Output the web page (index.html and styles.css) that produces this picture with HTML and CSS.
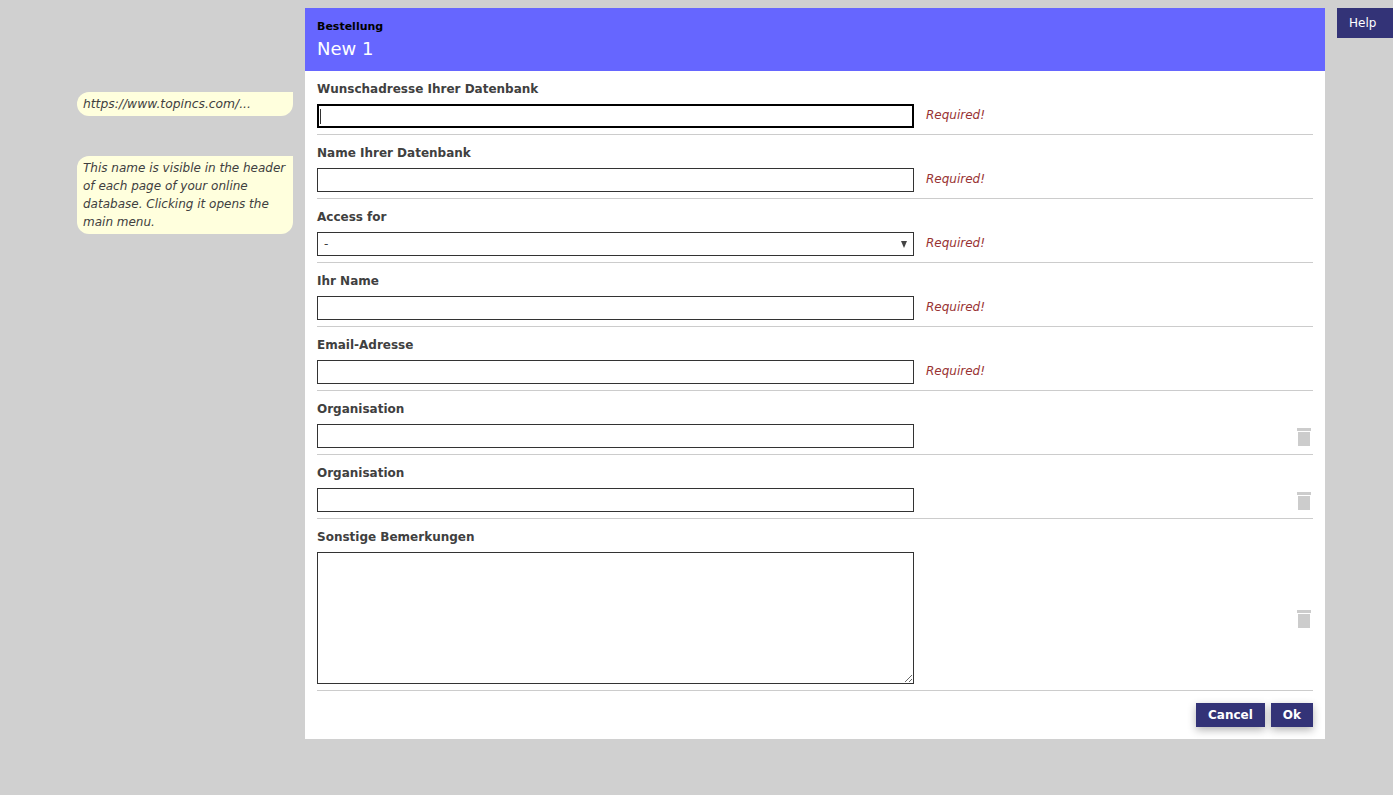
FILE: index.html
```html
<!DOCTYPE html>
<html lang="de">
<head>
<meta charset="utf-8">
<title>Bestellung</title>
<link rel="stylesheet" href="styles.css">
</head>
<body>
<div class="page">
  <aside class="notes">
    <p class="note note-url">https://www.topincs.com/...</p>
    <p class="note">This name is visible in the header of each page of your online database. Clicking it opens the main menu.</p>
  </aside>
  <main class="panel">
    <header class="panel-head">
      <div class="eyebrow">Bestellung</div>
      <h1 class="title">New 1</h1>
    </header>
    <form class="form">
      <div class="row">
        <label class="label">Wunschadresse Ihrer Datenbank</label>
        <div class="line"><span class="wrap wrap-caret"><input class="field" type="text" autofocus></span><span class="msg">Required!</span></div>
      </div>
      <div class="row">
        <label class="label">Name Ihrer Datenbank</label>
        <div class="line"><input class="field" type="text"><span class="msg">Required!</span></div>
      </div>
      <div class="row">
        <label class="label">Access for</label>
        <div class="line"><span class="wrap wrap-arrow"><select class="field select"><option>-</option></select></span><span class="msg">Required!</span></div>
      </div>
      <div class="row">
        <label class="label">Ihr Name</label>
        <div class="line"><input class="field" type="text"><span class="msg">Required!</span></div>
      </div>
      <div class="row">
        <label class="label">Email-Adresse</label>
        <div class="line"><input class="field" type="text"><span class="msg">Required!</span></div>
      </div>
      <div class="row">
        <label class="label">Organisation</label>
        <div class="line"><input class="field" type="text">
          <svg class="trash" viewBox="0 0 14 18" aria-hidden="true"><path d="M0 0h14v3H0zM1 4h12v14H1z"/></svg></div>
      </div>
      <div class="row">
        <label class="label">Organisation</label>
        <div class="line"><input class="field" type="text">
          <svg class="trash" viewBox="0 0 14 18" aria-hidden="true"><path d="M0 0h14v3H0zM1 4h12v14H1z"/></svg></div>
      </div>
      <div class="row">
        <label class="label">Sonstige Bemerkungen</label>
        <div class="line"><textarea class="field area"></textarea>
          <svg class="trash" viewBox="0 0 14 18" aria-hidden="true"><path d="M0 0h14v3H0zM1 4h12v14H1z"/></svg></div>
      </div>
      <div class="actions">
        <button class="btn" type="button">Cancel</button>
        <button class="btn" type="button">Ok</button>
      </div>
    </form>
  </main>
  <button class="help" type="button">Help</button>
</div>
</body>
</html>
```

FILE: styles.css
```css
* { box-sizing: border-box; }
html, body { height: 100%; }
body {
  margin: 0;
  background: #d0d0d0;
  font-family: "DejaVu Sans", sans-serif;
  font-size: 12px;
  color: #404040;
  overflow: hidden;
}
.page {
  display: flex;
  align-items: flex-start;
  padding-top: 8px;
}
.notes {
  width: 305px;
  flex: none;
  padding: 84px 12px 0 77px;
  display: flex;
  flex-direction: column;
  gap: 40px;
}
.note {
  margin: 0;
  padding: 3px 0 3px 6px;
  background: #ffffdd;
  border-radius: 12px 0 12px 12px;
  font-style: italic;
  font-size: 12px;
  line-height: 18px;
  color: #404040;
}
.note-url { font-size: 12.3px; }
.panel {
  width: 1020px;
  flex: none;
  background: #fff;
}
.panel-head {
  height: 63px;
  padding: 12px 12px 0;
  background: #6666ff;
}
.eyebrow {
  font-size: 11px;
  font-weight: bold;
  line-height: 14px;
  color: #000;
}
.title {
  margin: 5px 0 0;
  font-size: 18px;
  font-weight: normal;
  line-height: 20px;
  color: #fff;
}
.form {
  padding: 0 12px 12px;
}
.row {
  padding: 11px 0 6px;
  border-bottom: 1px solid #ccc;
}
.label {
  display: block;
  height: 22px;
  font-weight: bold;
  line-height: 15px;
  color: #404040;
}
.line {
  display: flex;
  align-items: center;
}
.wrap {
  position: relative;
  display: block;
  flex: none;
}
.wrap-caret::after {
  content: "";
  position: absolute;
  left: 3px;
  top: 5px;
  width: 1px;
  height: 15px;
  background: #333;
}
.wrap-arrow::after {
  content: "";
  position: absolute;
  right: 7px;
  top: 9px;
  border-left: 3.5px solid transparent;
  border-right: 3.5px solid transparent;
  border-top: 7px solid #444;
  pointer-events: none;
}
.field {
  display: block;
  width: 597px;
  height: 24px;
  flex: none;
  margin: 0;
  padding: 1px 2px;
  border: 1px solid #333;
  border-radius: 0;
  background: #fff;
  font-family: "DejaVu Sans", sans-serif;
  font-size: 12px;
  color: #404040;
}
.field:focus {
  outline: 2px solid #000;
  outline-offset: -2px;
}
.select {
  padding: 1px 2px 1px 6px;
  appearance: none;
  -webkit-appearance: none;
}
.area { height: 132px; resize: both; }
.msg {
  margin: 0 0 2px 12px;
  font-family: "DejaVu Sans", sans-serif;
  font-style: italic;
  font-size: 12px;
  color: #993333;
}
.trash {
  width: 14px;
  height: 18px;
  margin: 2px 2px 0 auto;
  fill: #cccccc;
  flex: none;
}
.actions {
  display: flex;
  justify-content: flex-end;
  gap: 6px;
  padding-top: 12px;
}
.btn {
  height: 24px;
  padding: 0 12px;
  border: 0;
  background: #333377;
  box-shadow: 0 3px 8px rgba(0, 0, 0, 0.3);
  font-family: "DejaVu Sans", sans-serif;
  font-size: 12px;
  font-weight: bold;
  color: #fff;
}
.help {
  flex: none;
  width: 56px;
  height: 30px;
  margin-left: 12px;
  padding: 0 0 0 12px;
  border: 0;
  background: #333377;
  font-family: "DejaVu Sans", sans-serif;
  font-size: 12px;
  text-align: left;
  color: #fff;
}
```
